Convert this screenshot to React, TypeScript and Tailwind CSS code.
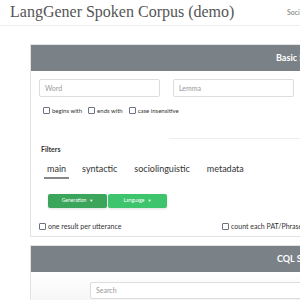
const Check = ({ label }: { label: string }) => (
  <label className="flex items-center gap-[2px]">
    <span className="inline-block w-[7px] h-[7px] border border-gray-500 rounded-[1px] bg-white" />
    <span>{label}</span>
  </label>
);

const App = () => {
  return (
    <div className="w-[300px] h-[300px] overflow-hidden bg-white font-['Lato',sans-serif] text-[#333]">
      <div className="h-[26px] border-b border-[#eeeeee] flex items-start relative">
        <h1 className="ml-[10px] mt-[2px] text-[16px] leading-[20px] text-[#555] font-['Liberation_Serif',serif] whitespace-nowrap">
          LangGener Spoken Corpus (demo)
        </h1>
        <span className="absolute left-[287px] top-[7px] text-[7px] text-[#777]">Social</span>
      </div>

      <div className="ml-[30px] mt-[18px] w-[400px]">
        <div className="border border-[#e3e3e3] bg-white">
          <div className="h-[26px] bg-[#7a8288] flex items-center pl-[245px] text-white font-bold text-[9px]">
            Basic Search
          </div>
          <div className="pl-[8px] pt-[8px] pb-[4px]">
            <div className="flex gap-[13px]">
              <div className="w-[121px] h-[18px] border border-[#ddd] rounded-[2px] flex items-center pl-[5px] text-[7px] text-[#999]">
                Word
              </div>
              <div className="w-[121px] h-[18px] border border-[#ddd] rounded-[2px] flex items-center pl-[5px] text-[7px] text-[#999]">
                Lemma
              </div>
            </div>
            <div className="flex gap-[6px] mt-[9px] ml-[4px] text-[6px] text-[#333]">
              <Check label="begins with" />
              <Check label="ends with" />
              <Check label="case insensitive" />
            </div>
            <div className="ml-[130px] mt-[23px] border-t border-[#eee]" />
            <div className="ml-[2px] mt-[5px] text-[7px] font-bold text-[#333]">Filters</div>
            <div className="flex mt-[7px] ml-[5px] text-[9px] text-[#333]">
              <div className="px-[3px] pb-[2px] border-b-2 border-[#888]">main</div>
              <div className="ml-[13px]">syntactic</div>
              <div className="ml-[17px]">sociolinguistic</div>
              <div className="ml-[17px]">metadata</div>
            </div>
            <div className="flex mt-[15px] ml-[9px] gap-[1px]">
              <div className="w-[59px] h-[14px] bg-[#3ca55c] rounded-[2px] flex items-center justify-center gap-[3px] text-white text-[5px] shadow-sm">
                Generation <span className="text-[4px]">▼</span>
              </div>
              <div className="w-[59px] h-[14px] bg-[#3dc46d] rounded-[2px] flex items-center justify-center gap-[3px] text-white text-[5px] shadow-sm">
                Language <span className="text-[4px]">▼</span>
              </div>
            </div>
            <div className="flex mt-[13px] text-[7px] text-[#333] whitespace-nowrap">
              <div className="w-[183px]">
                <Check label="one result per utterance" />
              </div>
              <Check label="count each PAT/Phrase" />
            </div>
          </div>
        </div>

        <div className="mt-[8px] border border-[#e3e3e3] bg-white">
          <div className="h-[26px] bg-[#7a8288] flex items-center pl-[246px] text-white font-bold text-[9px]">
            CQL Search
          </div>
          <div className="pt-[10px] pl-[59px] pb-[10px] bg-gradient-to-b from-white to-[#f3f3f3]">
            <div className="h-[17px] bg-white border border-[#ddd] rounded-[2px] flex items-center pl-[5px] text-[7px] text-[#999]">
              Search
            </div>
          </div>
        </div>
      </div>
    </div>
  );
};

export default App;
